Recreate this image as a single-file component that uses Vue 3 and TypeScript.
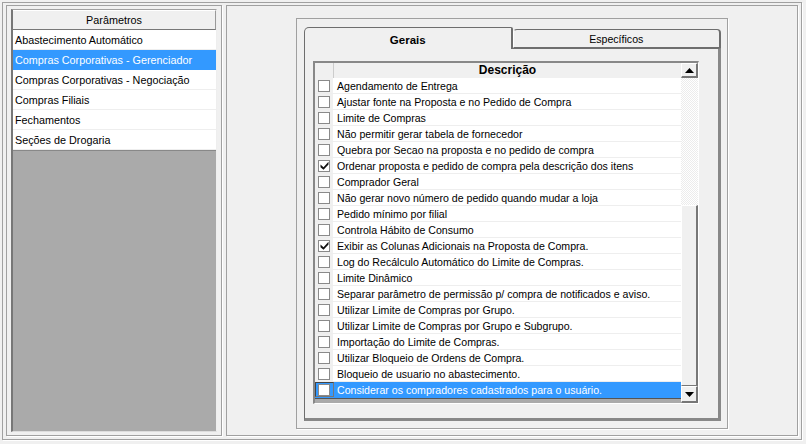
<script setup lang="ts">
interface Opt { label: string; checked?: boolean; selected?: boolean }

const params = [
  'Abastecimento Automático',
  'Compras Corporativas - Gerenciador',
  'Compras Corporativas - Negociação',
  'Compras Filiais',
  'Fechamentos',
  'Seções de Drogaria',
]
const activeParam = 1

const options: Opt[] = [
  { label: 'Agendamento de Entrega' },
  { label: 'Ajustar fonte na Proposta e no Pedido de Compra' },
  { label: 'Limite de Compras' },
  { label: 'Não permitir gerar tabela de fornecedor' },
  { label: 'Quebra por Secao na proposta e no pedido de compra' },
  { label: 'Ordenar proposta e pedido de compra pela descrição dos itens', checked: true },
  { label: 'Comprador Geral' },
  { label: 'Não gerar novo número de pedido quando mudar a loja' },
  { label: 'Pedido mínimo por filial' },
  { label: 'Controla Hábito de Consumo' },
  { label: 'Exibir as Colunas Adicionais na Proposta de Compra.', checked: true },
  { label: 'Log do Recálculo Automático do Limite de Compras.' },
  { label: 'Limite Dinâmico' },
  { label: 'Separar parâmetro de permissão p/ compra de notificados e aviso.' },
  { label: 'Utilizar Limite de Compras por Grupo.' },
  { label: 'Utilizar Limite de Compras por Grupo e Subgrupo.' },
  { label: 'Importação do Limite de Compras.' },
  { label: 'Utilizar Bloqueio de Ordens de Compra.' },
  { label: 'Bloqueio de usuario no abastecimento.' },
  { label: 'Considerar os compradores cadastrados para o usuário.', selected: true },
]
</script>

<template>
  <div class="screen">
    <div class="outer">
      <aside class="side">
        <div class="side-grid">
          <div class="side-head">Parâmetros</div>
          <div
            v-for="(p, i) in params"
            :key="p"
            class="side-row"
            :class="{ on: i === activeParam }"
          >{{ p }}</div>
          <div class="side-empty"></div>
        </div>
      </aside>

      <main class="main">
        <div class="box">
          <div class="tabs">
            <div class="tab active">Gerais</div>
            <div class="tab">Específicos</div>
          </div>
          <div class="pane">
            <div class="grid">
              <div class="table">
                <div class="head">
                  <div class="head-gutter"></div>
                  <div class="head-title">Descrição</div>
                </div>
                <div
                  v-for="o in options"
                  :key="o.label"
                  class="row"
                  :class="{ sel: o.selected }"
                >
                  <div class="gutter">
                    <span class="check">
                      <svg v-if="o.checked" width="9" height="9" viewBox="0 0 9 9">
                        <path d="M0.5 3.5 L3.5 6.2 L8.5 0.8 L8.5 3.6 L3.5 8.8 L0.5 6.2 Z" fill="#111" />
                      </svg>
                    </span>
                  </div>
                  <div class="label">{{ o.label }}</div>
                </div>
                <div class="table-foot"></div>
              </div>
              <div class="scroll">
                <div class="btn up">
                  <svg width="9" height="5" viewBox="0 0 9 5"><path d="M4.5 0 L9 5 L0 5 Z" fill="#000" /></svg>
                </div>
                <div class="track"></div>
                <div class="thumb"></div>
                <div class="btn">
                  <svg width="9" height="5" viewBox="0 0 9 5"><path d="M0 0 L9 0 L4.5 5 Z" fill="#000" /></svg>
                </div>
              </div>
            </div>
          </div>
        </div>
      </main>
    </div>
  </div>
</template>

<style>
html, body { background: #f0f0f0; }
</style>

<style scoped>
.screen {
  width: 806px; height: 444px; box-sizing: border-box; padding: 2px 4px 4px 2px;
  background: #f0f0f0; overflow: hidden;
  font-family: "Liberation Sans", Arial, sans-serif; font-size: 10.6px; color: #000;
}
.outer {
  height: 100%; box-sizing: border-box; display: flex; gap: 4px;
  padding: 2px 3px 3px 3px;
  border: 1px solid #a0a0a0; box-shadow: 1px 1px 0 #fff;
}

.side {
  width: 216px; flex: none; box-sizing: border-box; padding: 3px 4px;
  border: 1px solid #a0a0a0; box-shadow: 1px 1px 0 #fff;
}
.side-grid {
  height: 100%; box-sizing: border-box; display: flex; flex-direction: column;
  border-top: 1px solid #a0a0a0; border-left: 2px solid #777; border-right: 1px solid #eee;
  border-bottom: 1px solid #ddd; background: #aaa; font-size: 10.8px;
}
.side-head {
  height: 20px; line-height: 19px; text-align: center; box-sizing: border-box;
  background: #f0f0f0; border-bottom: 1px solid #777; border-right: 1px solid #999;
  border-top: 1px solid #fff;
}
.side-row {
  height: 20px; line-height: 19px; padding: 1px 0 0 2px; box-sizing: border-box;
  background: #fff; border-bottom: 1px solid #eee;
}
.side-row.on { background: #3399ff; color: #fff; border-bottom-color: #3399ff; }
.side-empty { flex: 1; border-top: 1px solid #888; }

.main {
  flex: 1; box-sizing: border-box; padding: 12px 69px 6px 69px;
  border: 1px solid #a0a0a0; box-shadow: 1px 1px 0 #fff;
}
.box {
  height: 100%; box-sizing: border-box; padding: 9px 6px 7px 7px;
  display: flex; flex-direction: column;
  border: 1px solid #a0a0a0; box-shadow: 1px 1px 0 #fff;
}

.tabs { display: flex; height: 20px; flex: none; align-items: flex-end; position: relative; z-index: 1; }
.tab {
  flex: 1; height: 19px; line-height: 19px; box-sizing: border-box; text-align: center;
  background: #f0f0f0; border: 1px solid #6e6e6e; border-left-color: #fff;
  border-right-width: 2px; border-top-left-radius: 4px; border-top-right-radius: 4px;
}
.tab.active {
  height: 22px; line-height: 21px; padding-top: 2px; margin-bottom: -1px; font-weight: 700; font-size: 11.5px;
  border-bottom: none; border-left: 1px solid #6e6e6e; border-right: 2px solid #6e6e6e;
  border-top-right-radius: 2px; border-top-left-radius: 5px; position: relative;
}

.pane {
  flex: 1; min-height: 0; box-sizing: border-box; padding: 12px 19px 14px 8px; background: #f0f0f0;
  border-left: 1px solid #6e6e6e; border-top: 1px solid #6e6e6e;
  border-right: 3px solid #888; border-bottom: 3px solid #888;
}
.grid {
  height: 100%; box-sizing: border-box; display: flex;
  border-top: 2px solid #888; border-left: 2px solid #888;
  border-right: 1px solid #fff; border-bottom: 1px solid #fff;
}
.table { flex: 1; display: flex; flex-direction: column; background: #aaa; min-width: 0; }

.head { height: 15px; flex: none; display: flex; background: #f0f0f0; }
.head-gutter { width: 18px; flex: none; border-right: 1px solid #ccc; }
.head-title { flex: 1; text-align: center; font-weight: 700; line-height: 15px; font-size: 12px; }

.row { height: 16px; flex: none; display: flex; background: #fff; box-sizing: border-box; border-bottom: 1px solid #eee; }
.gutter { width: 15px; padding-left: 3px; flex: none; display: flex; align-items: center; background: #f0f0f0; border-right: 1px solid #fff; }
.check {
  width: 12px; height: 12px; box-sizing: border-box; display: flex; align-items: center; justify-content: center;
  background: #fff; border: 1px solid #8a8a8a;
}
.label { flex: 1; padding-left: 3px; line-height: 16px; white-space: nowrap; overflow: hidden; }
.row.sel { background: #3399ff; color: #fff; border-bottom-color: #3399ff; }
.row.sel .gutter { background: #3399ff; border: 1px solid #777; border-top-color: #444; border-left-color: #444; box-sizing: border-box; width: 19px; padding-left: 2px; }
.table-foot { flex: 1; border-top: 1px solid #555; background: #aaa; }

.scroll { width: 17px; flex: none; display: flex; flex-direction: column; }
.btn {
  height: 17px; flex: none; box-sizing: border-box; display: flex; align-items: center; justify-content: center;
  background: #f0f0f0; border: 1px solid #fff; border-right: 2px solid #777; border-bottom: 2px solid #777;
}
.btn.up { height: 15px; }
.track {
  height: 127px; flex: none;
  background-color: #fff;
  background-image: repeating-conic-gradient(#ececec 0 25%, #fff 0 50%);
  background-size: 2px 2px;
}
.thumb {
  flex: 1; background: #f0f0f0; box-sizing: border-box;
  border: 1px solid #fff; border-right: 2px solid #777; border-bottom: 1px solid #777;
}
</style>
